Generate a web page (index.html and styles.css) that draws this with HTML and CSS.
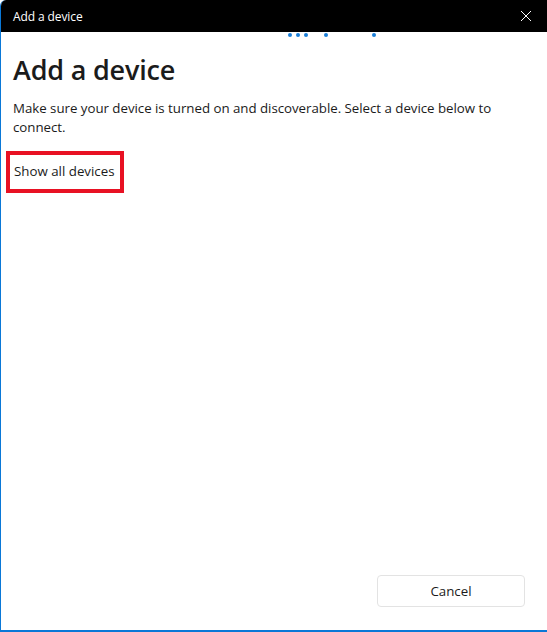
FILE: index.html
```html
<!DOCTYPE html>
<html>
<head>
<meta charset="utf-8">
<link rel="stylesheet" href="styles.css">
</head>
<body>
<div class="window">
  <div class="titlebar">
    <span class="title">Add a device</span>
    <span class="close">
      <svg width="12" height="12" viewBox="0 0 12 12"><path d="M1 1 L11 11 M11 1 L1 11" stroke="#fff" stroke-width="1" fill="none"/></svg>
    </span>
  </div>
  <div class="content">
    <div class="dots">
      <i style="left:289px"></i><i style="left:297px"></i><i style="left:305px"></i><i style="left:325px"></i><i style="left:373px"></i>
    </div>
    <h1 class="heading">Add a device</h1>
    <p class="desc">Make sure your device is turned on and discoverable. Select a device below to connect.</p>
    <div class="showall">Show all devices</div>
    <div class="spacer"></div>
    <div class="footer">
      <button class="cancel">Cancel</button>
    </div>
  </div>
</div>
</body>
</html>
```
FILE: styles.css
```css
html, body {
  margin: 0;
  padding: 0;
  background: #ffffff;
}
body {
  font-family: "Segoe UI", "Open Sans", "Noto Sans", sans-serif;
  color: #1b1b1b;
}
.window {
  width: 547px;
  height: 632px;
  box-sizing: border-box;
  border-left: 1px solid #0a78d7;
  border-bottom: 2px solid #0a78d7;
  border-top-left-radius: 6px;
  overflow: hidden;
  display: flex;
  flex-direction: column;
  position: relative;
  background: #fff;
}
.titlebar {
  height: 32px;
  flex: none;
  background: #000;
  color: #fff;
  display: flex;
  align-items: center;
  justify-content: space-between;
  padding: 0 15px 0 12px;
}
.title {
  font-size: 12px;
  letter-spacing: -0.1px;
}
.close {
  display: flex;
  width: 12px;
  height: 12px;
}
.content {
  flex: 1;
  display: flex;
  flex-direction: column;
  padding: 0 0 0 12px;
  position: relative;
}
.dots i {
  position: absolute;
  top: 1px;
  width: 4px;
  height: 4px;
  margin-left: -2px;
  border-radius: 50%;
  background: #1a7fd9;
}
.heading {
  margin: 20px 0 0 0;
  font-size: 27px;
  font-weight: 600;
  line-height: 36px;
  letter-spacing: -0.2px;
  color: #1b1b1b;
}
.desc {
  margin: 11px 0 0 0;
  font-size: 13.3px;
  line-height: 19px;
  width: 500px;
  color: #1b1b1b;
  letter-spacing: -0.03px;
}
.showall {
  align-self: flex-start;
  margin: 14px 0 0 -7px;
  border: 4px solid #e81123;
  padding: 7px 5px 8px 4px;
  font-size: 13.3px;
  line-height: 19px;
}
.spacer { flex: 1; }
.footer {
  display: flex;
  justify-content: flex-end;
  padding: 0 22px 23px 0;
}
.cancel {
  width: 148px;
  height: 32px;
  background: #fff;
  border: 1px solid #e3e3e3;
  border-radius: 4px;
  font-family: inherit;
  font-size: 13.3px;
  color: #1b1b1b;
  padding: 0;
}
```
